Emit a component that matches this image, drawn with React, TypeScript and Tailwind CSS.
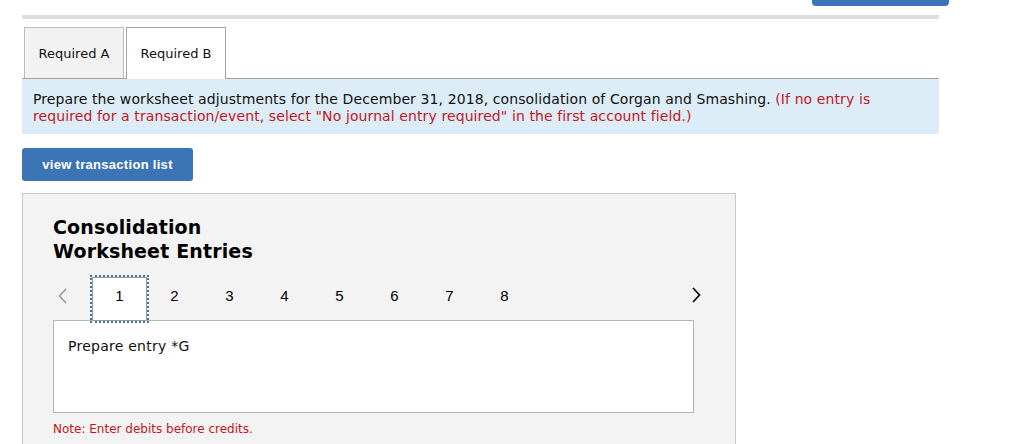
import React from "react";

const verdana = { fontFamily: '"DejaVu Sans", Verdana, sans-serif' };

export default function App() {
  const nums = [2, 3, 4, 5, 6, 7, 8];
  return (
    <div className="w-[1024px] h-[444px] overflow-hidden bg-white text-[#111]" style={verdana}>
      <div className="w-[949px] flex justify-end">
        <div className="w-[137px] h-[6px] bg-[#3b75b6] rounded-b-[4px]" />
      </div>
      <div className="ml-[22px] w-[917px]">
        <div className="mt-[9px] h-[4px] bg-[#dedede]" />
        <div className="mt-[8px] flex gap-[2px] pl-[2px] border-b border-[#a3a3a3]">
          <div className="w-[100px] h-[51px] pt-[2px] bg-[#f2f2f2] border border-b-0 border-[#bdbdbd] flex items-center justify-center text-[13px] text-[#111]">
            Required A
          </div>
          <div className="w-[100px] h-[52px] pt-[1px] -mb-px bg-white border border-b-0 border-[#a3a3a3] flex items-center justify-center text-[13px] text-[#111]">
            Required B
          </div>
        </div>
        <div className="bg-[#ddedf8] h-[55px] pl-[11px] pr-[40px] pt-[12px] text-[14px] leading-[17px] tracking-[0.1px] text-[#111]">
          Prepare the worksheet adjustments for the December 31, 2018, consolidation of Corgan and Smashing.{" "}
          <span className="text-[#c4161c]">
            (If no entry is required for a transaction/event, select "No journal entry required" in the first account field.)
          </span>
        </div>
        <button
          className="mt-[14px] w-[171px] h-[33px] bg-[#3b75b6] rounded-[3px] text-white text-[13px] font-bold tracking-[0.3px] flex items-center justify-center"
          style={{ fontFamily: '"Liberation Sans", Arial, sans-serif' }}
        >
          view transaction list
        </button>
        <div className="mt-[12px] w-[714px] h-[260px] bg-[#f3f3f3] border border-[#c8c8c8] pl-[30px] pt-[21px]">
          <div className="text-[19px] font-bold leading-[24px] tracking-[0.15px] text-black">
            Consolidation
            <br />
            Worksheet Entries
          </div>
          <div className="mt-[14px] flex items-start h-[44px] -ml-[30px]" style={{ fontFamily: '"Liberation Sans", Arial, sans-serif' }}>
            <div className="ml-[35px] mt-[11px] w-[9px] h-[16px]">
              <svg width="9" height="16" viewBox="0 0 9 16">
                <path d="M8 1 L1.5 8 L8 15" fill="none" stroke="#9a9a9a" strokeWidth="1.6" />
              </svg>
            </div>
            <div className="ml-[25px] relative z-10 w-[55px] h-[44px] bg-white border border-[#9a9a9a] outline-2 outline-dotted outline-[#3b75b6] pt-[10px] text-center text-[15px] leading-[16px] text-black">
              1
            </div>
            {nums.map((n) => (
              <div key={n} className="w-[55px] h-[44px] pt-[11px] text-center text-[15px] leading-[16px] text-black">
                {n}
              </div>
            ))}
            <div className="ml-auto mr-[34px] mt-[10px] w-[9px] h-[16px]">
              <svg width="9" height="16" viewBox="0 0 9 16">
                <path d="M1 1 L7.5 8 L1 15" fill="none" stroke="#111" strokeWidth="1.8" />
              </svg>
            </div>
          </div>
          <div className="-mt-px w-[641px] h-[93px] bg-white border border-[#b5b5b5] pl-[14px] pt-[17px] text-[14px] leading-[17px] tracking-[0.25px] text-[#111]">
            Prepare entry *G
          </div>
          <div className="mt-[9px] text-[12px] leading-[14px] text-[#c4161c]">Note: Enter debits before credits.</div>
        </div>
      </div>
    </div>
  );
}
